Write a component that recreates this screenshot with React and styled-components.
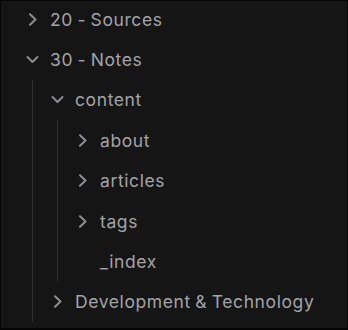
import React from 'react';
import styled, { createGlobalStyle } from 'styled-components';

const GlobalStyle = createGlobalStyle`
  html, body {
    margin: 0;
    padding: 0;
    background: #151515;
  }
`;

const tree = [
  { name: '20 - Sources', children: [], open: false },
  {
    name: '30 - Notes',
    open: true,
    children: [
      {
        name: 'content',
        open: true,
        children: [
          { name: 'about', children: [], open: false },
          { name: 'articles', children: [], open: false },
          { name: 'tags', children: [], open: false },
          { name: '_index' },
        ],
      },
      { name: 'Development & Technology', children: [], open: false },
    ],
  },
];

const Chevron = ({ open }) => (
  <ChevronBox>
    <svg width="13" height="13" viewBox="0 0 13 13" fill="none">
      {open ? (
        <path d="M1.5 4 L6.5 9 L11.5 4" stroke="#8c8c92" strokeWidth="2" strokeLinecap="round" strokeLinejoin="round" />
      ) : (
        <path d="M4 1.2 L9.5 6.5 L4 11.8" stroke="#8c8c92" strokeWidth="2" strokeLinecap="round" strokeLinejoin="round" />
      )}
    </svg>
  </ChevronBox>
);

const Node = ({ node }) => {
  const isFolder = Array.isArray(node.children);
  return (
    <li>
      <Row>
        {isFolder ? <Chevron open={node.open} /> : <ChevronBox />}
        <Label>{node.name}</Label>
      </Row>
      {isFolder && node.open && (
        <Children>
          {node.children.map(child => (
            <Node key={child.name} node={child} />
          ))}
        </Children>
      )}
    </li>
  );
};

export default function App() {
  return (
    <>
      <GlobalStyle />
      <Frame>
        <List>
          {tree.map(node => (
            <Node key={node.name} node={node} />
          ))}
        </List>
      </Frame>
    </>
  );
}

const Frame = styled.div`
  width: 348px;
  height: 330px;
  box-sizing: border-box;
  border: 1px solid #050505;
  border-bottom-width: 2px;
  background: #151515;
  overflow: hidden;
  padding: 0 0 0 25px;
  font-family: Inter, 'Noto Sans', sans-serif;
`;

const List = styled.ul`
  list-style: none;
  margin: -2px 0 0;
  padding: 0;
`;

const Children = styled.ul`
  list-style: none;
  margin: 0 0 0 6px;
  padding: 0 0 0 18px;
  border-left: 1px solid #2e2e30;
`;

const Row = styled.div`
  display: flex;
  align-items: center;
  height: 40.4px;
  gap: 11px;
`;

const ChevronBox = styled.span`
  display: flex;
  align-items: center;
  justify-content: center;
  width: 13px;
  height: 13px;
  flex-shrink: 0;
`;

const Label = styled.span`
  font-size: 17.5px;
  color: #a3a3a8;
  letter-spacing: 0.6px;
  word-spacing: -1px;
  white-space: nowrap;
`;
